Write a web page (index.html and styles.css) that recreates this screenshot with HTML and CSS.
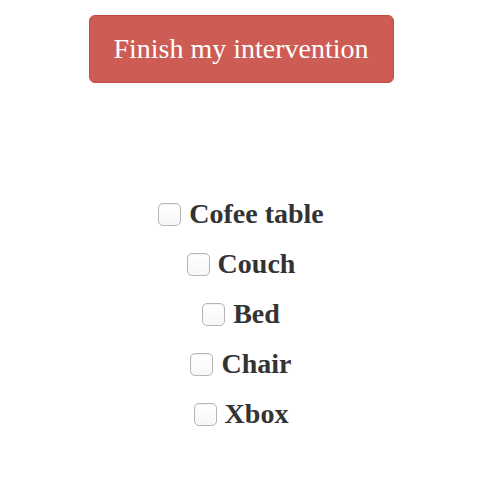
FILE: index.html
```html
<!DOCTYPE html>
<html>
<head>
<meta charset="utf-8">
<link rel="stylesheet" href="styles.css">
</head>
<body>
<div class="page">
  <button class="finish">Finish my intervention</button>
  <ul class="items">
    <li class="item"><label><input type="checkbox" class="box"><span>Cofee table</span></label></li>
    <li class="item"><label><input type="checkbox" class="box"><span>Couch</span></label></li>
    <li class="item"><label><input type="checkbox" class="box"><span>Bed</span></label></li>
    <li class="item"><label><input type="checkbox" class="box"><span>Chair</span></label></li>
    <li class="item"><label><input type="checkbox" class="box"><span>Xbox</span></label></li>
  </ul>
</div>
</body>
</html>
```

FILE: styles.css
```css
html, body {
  margin: 0;
  padding: 0;
  background: #fff;
}
.page {
  width: 482px;
  display: flex;
  flex-direction: column;
  align-items: center;
  font-family: "Liberation Serif", "Times New Roman", serif;
}
.finish {
  margin-top: 15px;
  width: 305px;
  height: 68px;
  background: #cd5c55;
  border: 1px solid #c64a42;
  border-radius: 6px;
  color: #fff;
  font-family: "Liberation Serif", "Times New Roman", serif;
  font-size: 28px;
  padding: 0;
}
.items {
  list-style: none;
  margin: 0;
  padding: 0;
  margin-top: 115px;
  display: flex;
  flex-direction: column;
  align-items: center;
  gap: 18px;
}
.item label {
  display: flex;
  align-items: center;
  gap: 8px;
  font-size: 28px;
  font-weight: bold;
  color: #333;
  height: 32px;
}
.box {
  appearance: none;
  -webkit-appearance: none;
  margin: 0;
  width: 23px;
  height: 23px;
  border: 1px solid #b5b5b5;
  border-radius: 5px;
  background: linear-gradient(#fff, #f7f7f7);
  box-shadow: inset 0 1px 1px rgba(0,0,0,0.06);
}
```
